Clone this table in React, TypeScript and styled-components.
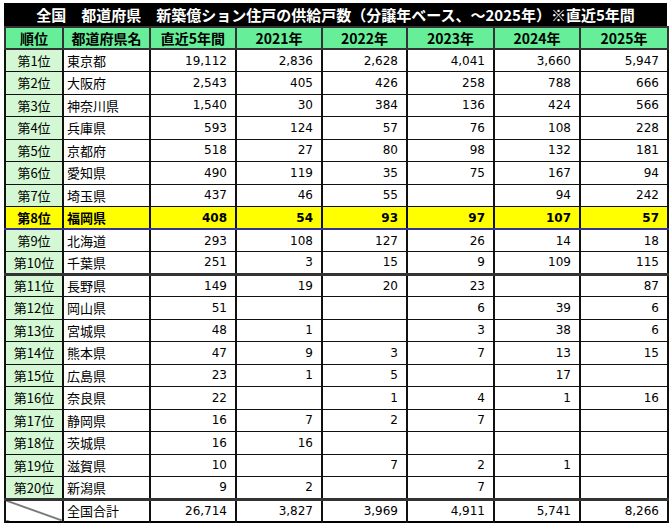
import React from "react";
import styled, { createGlobalStyle } from "styled-components";

const Global = createGlobalStyle`
  html, body { margin: 0; padding: 0; background: #fff; }
  body { font-family: "DejaVu Sans", "Noto Sans CJK JP", sans-serif; }
`;

const Wrapper = styled.div`
  width: 663px;
  margin: 3px 0 0 4px;
  display: flex;
  flex-direction: column;
`;

const TitleBar = styled.div`
  height: 23px;
  background: #000;
  color: #fff;
  font-family: "Noto Sans CJK JP", sans-serif;
  font-weight: 700;
  font-size: 15px;
  display: flex;
  align-items: center;
  justify-content: center;
  letter-spacing: 0;
  white-space: pre;
`;

const Table = styled.table`
  border-collapse: collapse;
  width: 663px;
  table-layout: fixed;
  border: 2px solid #000;
`;

const Cell = styled.td`
  border: 1px solid #111;
  border-left: 2px solid #111;
  border-right: 2px solid #111;
  padding: 0;
  font-size: 12px;
  color: #000;
  white-space: nowrap;
`;

const HeadCell = styled.th`
  border: 2px solid #333;
  background: #66ee99;
  font-family: "Noto Sans CJK JP", sans-serif;
  font-weight: 700;
  font-size: 14px;
  height: 20px;
  padding: 0;
  text-align: center;
  color: #000;
`;

const RankCell = styled(Cell)<{ $hl?: boolean }>`
  background: ${(p) => (p.$hl ? "#ffff00" : "#d4f8d4")};
  text-align: center;
  font-family: "Noto Sans CJK JP", sans-serif;
  font-weight: ${(p) => (p.$hl ? 700 : 400)};
  font-size: 13px;
`;

const NameCell = styled(Cell)<{ $hl?: boolean }>`
  background: ${(p) => (p.$hl ? "#ffff00" : "#fff")};
  text-align: left;
  padding-left: 3px;
  font-family: "Noto Sans CJK JP", sans-serif;
  font-weight: ${(p) => (p.$hl ? 700 : 400)};
  font-size: 13px;
`;

const NumCell = styled(Cell)<{ $hl?: boolean }>`
  background: ${(p) => (p.$hl ? "#ffff00" : "#fff")};
  text-align: right;
  padding-right: 8px;
  font-family: "DejaVu Sans", sans-serif;
  font-weight: ${(p) => (p.$hl ? 700 : 400)};
`;

const DiagCell = styled(Cell)`
  background: linear-gradient(
    to top right,
    #fff calc(50% - 1px),
    #000 50%,
    #fff calc(50% + 1px)
  );
`;

const Row = styled.tr<{ $thick?: boolean; $hl?: boolean }>`
  height: 22.5px;
  & > td {
    border-bottom: ${(p) =>
      p.$thick ? "3px solid #333" : p.$hl ? "2px solid #33339a" : "1px solid #111"};
  }
`;

type R = [string, string, string, string, string, string, string, string];

const rows: R[] = [
  ["第1位", "東京都", "19,112", "2,836", "2,628", "4,041", "3,660", "5,947"],
  ["第2位", "大阪府", "2,543", "405", "426", "258", "788", "666"],
  ["第3位", "神奈川県", "1,540", "30", "384", "136", "424", "566"],
  ["第4位", "兵庫県", "593", "124", "57", "76", "108", "228"],
  ["第5位", "京都府", "518", "27", "80", "98", "132", "181"],
  ["第6位", "愛知県", "490", "119", "35", "75", "167", "94"],
  ["第7位", "埼玉県", "437", "46", "55", "", "94", "242"],
  ["第8位", "福岡県", "408", "54", "93", "97", "107", "57"],
  ["第9位", "北海道", "293", "108", "127", "26", "14", "18"],
  ["第10位", "千葉県", "251", "3", "15", "9", "109", "115"],
  ["第11位", "長野県", "149", "19", "20", "23", "", "87"],
  ["第12位", "岡山県", "51", "", "", "6", "39", "6"],
  ["第13位", "宮城県", "48", "1", "", "3", "38", "6"],
  ["第14位", "熊本県", "47", "9", "3", "7", "13", "15"],
  ["第15位", "広島県", "23", "1", "5", "", "17", ""],
  ["第16位", "奈良県", "22", "", "1", "4", "1", "16"],
  ["第17位", "静岡県", "16", "7", "2", "7", "", ""],
  ["第18位", "茨城県", "16", "16", "", "", "", ""],
  ["第19位", "滋賀県", "10", "", "7", "2", "1", ""],
  ["第20位", "新潟県", "9", "2", "", "7", "", ""],
];

const total = ["26,714", "3,827", "3,969", "4,911", "5,741", "8,266"];

const widths = [58, 87, 86, 86, 85, 87, 86, 88];
const heads = ["順位", "都道府県名", "直近5年間", "2021年", "2022年", "2023年", "2024年", "2025年"];

export default function App() {
  return (
    <>
      <Global />
      <Wrapper>
        <TitleBar>全国　都道府県　新築億ション住戸の供給戸数（分譲年ベース、～2025年）※直近5年間</TitleBar>
        <Table>
          <colgroup>
            {widths.map((w, i) => (
              <col key={i} style={{ width: w }} />
            ))}
          </colgroup>
          <thead>
            <tr>
              {heads.map((h) => (
                <HeadCell key={h}>{h}</HeadCell>
              ))}
            </tr>
          </thead>
          <tbody>
            {rows.map((r, i) => {
              const hl = i === 7;
              return (
                <Row key={r[0]} $hl={hl} $thick={i === 9 || i === 19}>
                  <RankCell $hl={hl}>{r[0]}</RankCell>
                  <NameCell $hl={hl}>{r[1]}</NameCell>
                  {r.slice(2).map((v, j) => (
                    <NumCell key={j} $hl={hl}>
                      {v}
                    </NumCell>
                  ))}
                </Row>
              );
            })}
            <Row>
              <DiagCell />
              <NameCell>全国合計</NameCell>
              {total.map((v, j) => (
                <NumCell key={j}>{v}</NumCell>
              ))}
            </Row>
          </tbody>
        </Table>
      </Wrapper>
    </>
  );
}
